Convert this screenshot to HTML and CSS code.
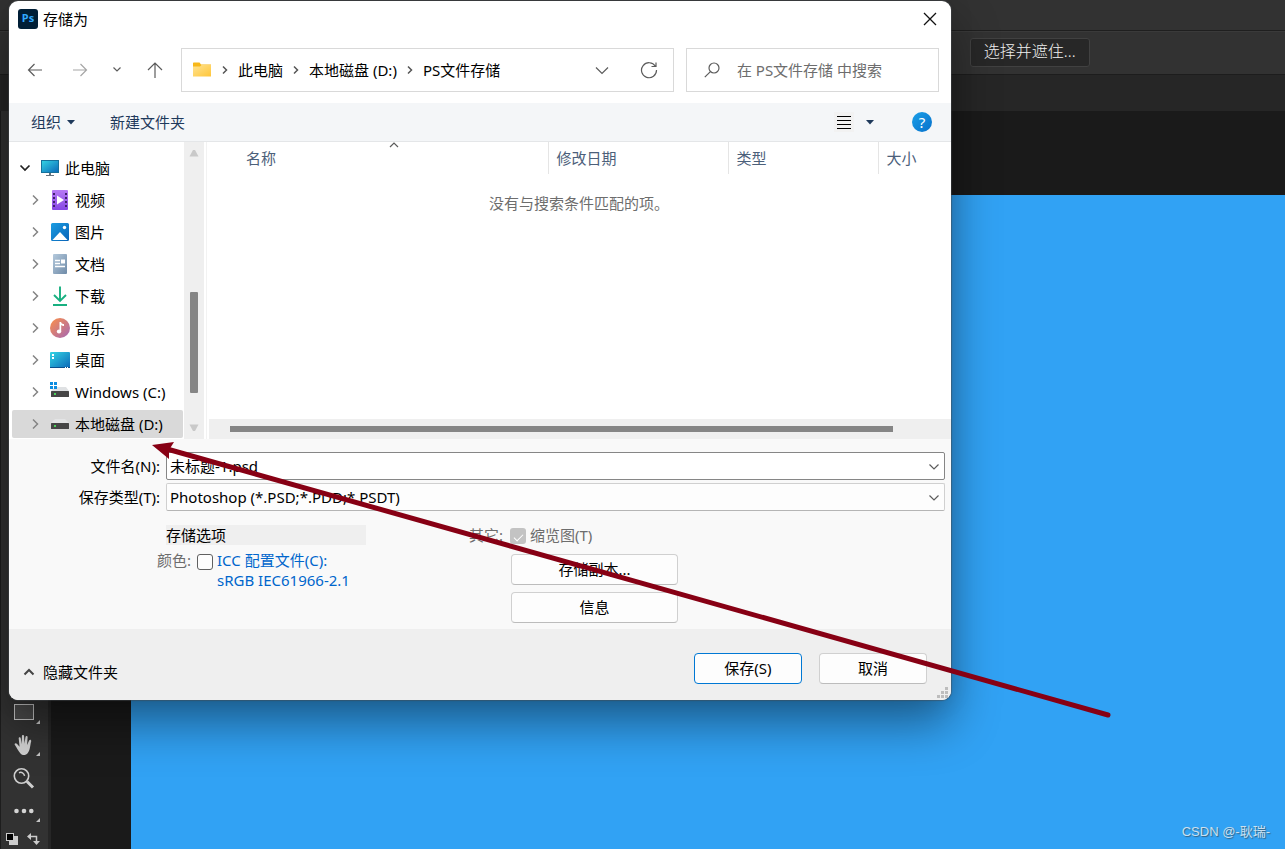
FILE: index.html
```html
<!DOCTYPE html>
<html lang="zh-CN">
<head>
<meta charset="utf-8">
<title>存储为</title>
<link rel="stylesheet" href="styles.css">
</head>
<body>
<div class="app">
  <header class="menu-bar"></header>
  <div class="options-bar"><button class="mask-button" type="button">选择并遮住...</button></div>
  <div class="tab-bar"></div>
  <div class="workspace">
    <aside class="tools">
      <button class="tool" type="button" aria-label="矩形工具">
        <svg width="34" height="24" viewBox="0 0 34 24"><rect x="7.500" y="4.500" width="19" height="15" fill="#4a4a4a" stroke="#c4c4c4"/><path d="M33 20v4h-4z" fill="#c4c4c4"/></svg>
      </button>
      <button class="tool" type="button" aria-label="抓手工具">
        <svg width="34" height="24" viewBox="0 0 34 24"><path d="M13.500 20.500C11 18 9.500 14 7.800 11.800c-.8-1.300.9-2.400 2.100-1l2.700 2.900-.9-8.200c-.1-1.500 1.900-1.600 2.100 0l.9 5.500.2-7.700c0-1.600 2.100-1.600 2.200 0l.3 7.500 1.100-6.700c.2-1.500 2.200-1.300 2.100.2l-.5 7.600 2-4.500c.7-1.400 2.400-.7 2.100.8-1.200 4.200-.9 8.600-3.400 11.800-2 2.500-5.200 2.700-7.300.5z" fill="#cfcfcf"/><path d="M33 19v4h-4z" fill="#c4c4c4"/></svg>
      </button>
      <button class="tool" type="button" aria-label="缩放工具">
        <svg width="34" height="24" viewBox="0 0 34 24"><circle cx="14.500" cy="10" r="7.200" fill="none" stroke="#cfcfcf" stroke-width="1.600"/><path d="M12 6.800c2.500-1.200 5 .2 5.600 3" fill="none" stroke="#cfcfcf" stroke-width="1.500"/><path d="M20 15.500l6 6" stroke="#cfcfcf" stroke-width="3"/></svg>
      </button>
      <button class="tool" type="button" aria-label="更多工具">
        <svg width="34" height="24" viewBox="0 0 34 24"><g fill="#d4d4d4"><circle cx="9.500" cy="12" r="2.300"/><circle cx="17" cy="12" r="2.300"/><circle cx="24.300" cy="12" r="2.300"/></g><path d="M33 19v4h-4z" fill="#c4c4c4"/></svg>
      </button>
      <button class="tool swatches" type="button" aria-label="切换颜色">
        <svg width="36" height="14" viewBox="0 0 36 14"><rect x="4" y="4" width="9" height="9" fill="#ccc"/><rect x="1.500" y="1.500" width="7" height="7" fill="#000" stroke="#ccc"/><path d="M24 4.500h7.500V11" fill="none" stroke="#ccc" stroke-width="1.500"/><path d="M22 4.500l4-3.500v7zM28 9h7l-3.500 4z" fill="#ccc"/></svg>
      </button>
    </aside>
    <main class="document"><p class="watermark">CSDN @-耿瑞-</p></main>
  </div>
</div>

<section class="dialog" role="dialog" aria-labelledby="dialog-title">
  <header class="title-bar">
    <svg width="20" height="20" viewBox="0 0 20 20"><rect width="20" height="20" rx="3" fill="#001e36"/><text class="logo-text" x="10" y="13" text-anchor="middle">Ps</text></svg>
    <h1 id="dialog-title">存储为</h1>
    <button class="icon-button close" type="button" aria-label="关闭"><svg width="14" height="14" viewBox="0 0 14 14"><path d="M1 1l12 12M13 1L1 13" stroke="#111" stroke-width="1.300"/></svg></button>
  </header>

  <nav class="nav-row">
    <div class="nav-buttons">
      <button class="icon-button back" type="button" aria-label="后退"><svg width="16" height="16" viewBox="0 0 16 16"><path d="M15 8H1.500M7.500 2l-6 6 6 6" class="line dark"/></svg></button>
      <button class="icon-button" type="button" aria-label="前进"><svg width="16" height="16" viewBox="0 0 16 16"><path d="M1 8h13.500M8.500 2l6 6-6 6" class="line pale"/></svg></button>
      <button class="icon-button" type="button" aria-label="最近"><svg width="10" height="16" viewBox="0 0 10 16"><path d="M1.500 5.500L5 9l3.500-3.500" class="line dark"/></svg></button>
      <button class="icon-button" type="button" aria-label="向上"><svg width="16" height="16" viewBox="0 0 16 16"><path d="M8 16V1M1 8l7-7 7 7" class="line dark"/></svg></button>
    </div>
    <div class="address">
      <svg width="20" height="16" viewBox="0 0 20 16"><defs><linearGradient id="folder" x1="0" y1="0" x2="1" y2="1"><stop offset="0" stop-color="#ffe391"/><stop offset="1" stop-color="#ffc63a"/></linearGradient></defs><path d="M1 1.500C1 .8 1.300.500 2 .500h5.500L9 2.500h10v4H1z" fill="#f7b718"/><path d="M1 4.500h7L9.500 3H19v11.500H1z" fill="url(#folder)"/></svg>
      <svg class="crumb-mark" width="8" height="10" viewBox="0 0 8 10"><path d="M2 1.500L5.500 5 2 8.500" class="line thick"/></svg>
      <a href="#pc">此电脑</a>
      <svg class="crumb-mark" width="8" height="10" viewBox="0 0 8 10"><path d="M2 1.500L5.500 5 2 8.500" class="line thick"/></svg>
      <a href="#d">本地磁盘 (D:)</a>
      <svg class="crumb-mark" width="8" height="10" viewBox="0 0 8 10"><path d="M2 1.500L5.500 5 2 8.500" class="line thick"/></svg>
      <a href="#ps">PS文件存储</a>
      <button class="icon-button address-drop" type="button" aria-label="历史"><svg width="16" height="16" viewBox="0 0 16 16"><path d="M2 5.500L8 11.500l6-6" class="line dark"/></svg></button>
      <button class="icon-button" type="button" aria-label="刷新"><svg width="18" height="18" viewBox="0 0 18 18"><path d="M15.400 5.300A7.500 7.500 0 1 0 16.500 9M16 1.500v4h-4.500" class="line dark"/></svg></button>
    </div>
    <label class="search">
      <svg width="16" height="16" viewBox="0 0 16 16"><circle cx="10" cy="6" r="5" class="line dark"/><path d="M6.400 9.600L.8 15.200" class="line dark"/></svg>
      <input type="search" aria-label="搜索" placeholder="在 PS文件存储 中搜索">
    </label>
  </nav>

  <div class="command-bar">
    <button class="command" type="button">组织 <svg width="8" height="5" viewBox="0 0 8 5"><path d="M0 0h8L4 4.500z" fill="#1e395b"/></svg></button>
    <button class="command" type="button">新建文件夹</button>
    <button class="icon-button view" type="button" aria-label="视图"><svg width="20" height="20" viewBox="0 0 20 20"><rect width="20" height="20" fill="#f2f2f2"/><path d="M3 4.500h14M3 8.500h14M3 12.500h14M3 16.500h14" stroke="#000"/></svg></button>
    <button class="icon-button" type="button" aria-label="更多视图"><svg width="8" height="5" viewBox="0 0 8 5"><path d="M0 0h8L4 4.500z" fill="#1e395b"/></svg></button>
    <button class="icon-button help" type="button" aria-label="帮助">?</button>
  </div>

  <div class="browser">
    <ul class="tree">
      <li class="root"><svg class="mark" width="12" height="12" viewBox="0 0 12 12"><path d="M1.500 3.500L6 8l4.500-4.500" class="line black"/></svg>
        <svg width="20" height="20" viewBox="0 0 20 20"><defs><linearGradient id="screen" x1="0" y1="0" x2="1" y2="1"><stop offset="0" stop-color="#34d5e4"/><stop offset="1" stop-color="#0b67b8"/></linearGradient></defs><rect x="1.500" y="2.500" width="17" height="12" fill="url(#screen)" stroke="#16719b"/><path d="M9 15h2v2H9zM6 17h8v1H6z" fill="#65727d"/></svg><span>此电脑</span></li>
      <li><svg class="mark" width="12" height="12" viewBox="0 0 12 12"><path d="M4 1.500L8.500 6 4 10.500" class="line gray"/></svg>
        <svg width="20" height="20" viewBox="0 0 20 20"><defs><linearGradient id="film" x1="0" y1="0" x2="0" y2="1"><stop offset="0" stop-color="#b77af5"/><stop offset="1" stop-color="#8647e4"/></linearGradient></defs><rect x="2" width="16" height="20" rx="1" fill="url(#film)"/><path d="M3 3h2v2H3zM3 7h2v2H3zM3 11h2v2H3zM3 15h2v2H3zM15 3h2v2h-2zM15 7h2v2h-2zM15 11h2v2h-2zM15 15h2v2h-2z" fill="#41206f"/><path d="M7 5.500l7 4.500-7 4.500z" fill="#fff"/></svg><span>视频</span></li>
      <li><svg class="mark" width="12" height="12" viewBox="0 0 12 12"><path d="M4 1.500L8.500 6 4 10.500" class="line gray"/></svg>
        <svg width="20" height="20" viewBox="0 0 20 20"><defs><linearGradient id="photo" x1="0" y1="0" x2="1" y2="1"><stop offset="0" stop-color="#1b9de2"/><stop offset="1" stop-color="#0963b7"/></linearGradient></defs><rect x="1" y="1" width="18" height="18" rx="1.500" fill="url(#photo)"/><path d="M2.500 18l7.500-8 7.500 8z" fill="#fff"/><circle cx="14.500" cy="5.500" r="1.700" fill="#fff"/></svg><span>图片</span></li>
      <li><svg class="mark" width="12" height="12" viewBox="0 0 12 12"><path d="M4 1.500L8.500 6 4 10.500" class="line gray"/></svg>
        <svg width="20" height="20" viewBox="0 0 20 20"><defs><linearGradient id="doc" x1="0" y1="0" x2="1" y2="1"><stop offset="0" stop-color="#b4c9dc"/><stop offset="1" stop-color="#6f8ba8"/></linearGradient></defs><rect x="3" width="14" height="20" rx="1" fill="url(#doc)"/><path d="M5 6.500h5M5 9.500h5M5 12.500h10" stroke="#fff" stroke-width="1.400"/><path d="M11 5.500h4v4h-4z" fill="#fff"/></svg><span>文档</span></li>
      <li><svg class="mark" width="12" height="12" viewBox="0 0 12 12"><path d="M4 1.500L8.500 6 4 10.500" class="line gray"/></svg>
        <svg width="20" height="20" viewBox="0 0 20 20"><path d="M10 .5v14M4 9l6 6 6-6M3 19h14" fill="none" stroke="#18b080" stroke-width="1.900"/></svg><span>下载</span></li>
      <li><svg class="mark" width="12" height="12" viewBox="0 0 12 12"><path d="M4 1.500L8.500 6 4 10.500" class="line gray"/></svg>
        <svg width="20" height="20" viewBox="0 0 20 20"><defs><linearGradient id="music" x1="0" y1="0" x2="1" y2="1"><stop offset=".15" stop-color="#f08a58"/><stop offset="1" stop-color="#a367b6"/></linearGradient></defs><circle cx="10" cy="10" r="10" fill="url(#music)"/><ellipse cx="9" cy="13.500" rx="2.200" ry="1.900" fill="#fff"/><path d="M9.500 4h1.700c0 2 2.800 2 2.800 2v2c-1.500 0-2.600-.7-2.800-1v6.500H9.500z" fill="#fff"/></svg><span>音乐</span></li>
      <li><svg class="mark" width="12" height="12" viewBox="0 0 12 12"><path d="M4 1.500L8.500 6 4 10.500" class="line gray"/></svg>
        <svg width="20" height="20" viewBox="0 0 20 20"><rect y="2" width="20" height="16" rx="1" fill="url(#screen)"/><path d="M2 4h2v2H2zM2 7h2v2H2z" fill="#fff"/><path d="M0 17h20v1H0z" fill="#0a4f8c"/><path d="M15 17h1v1h-1zM17 17h1v1h-1z" fill="#fff"/></svg><span>桌面</span></li>
      <li><svg class="mark" width="12" height="12" viewBox="0 0 12 12"><path d="M4 1.500L8.500 6 4 10.500" class="line gray"/></svg>
        <svg width="20" height="20" viewBox="0 0 20 20"><path d="M5 5h11l3 4H1z" fill="#dfe1e3"/><rect x="1" y="9" width="18" height="6" rx=".5" fill="#464646"/><path d="M4 11h2v2H4z" fill="#4bd15a"/><path d="M0 0h3v3H0zM4 0h3v3H4zM0 4h3v3H0zM4 4h3v3H4z" fill="#0c8ce0"/></svg><span>Windows (C:)</span></li>
      <li class="selected"><svg class="mark" width="12" height="12" viewBox="0 0 12 12"><path d="M4 1.500L8.500 6 4 10.500" class="line gray"/></svg>
        <svg width="20" height="20" viewBox="0 0 20 20"><path d="M5 5h10l4 4H1z" fill="#e3e4e5"/><rect x="1" y="9" width="18" height="6" rx=".5" fill="#464646"/><path d="M4 11h2v2H4z" fill="#4bd15a"/></svg><span>本地磁盘 (D:)</span></li>
    </ul>
    <div class="v-scroll"><svg width="10" height="8" viewBox="0 0 10 8"><path d="M4 1h2l3.500 6.500H.5z" fill="#c9c9c9"/></svg><span class="v-thumb"></span><svg width="10" height="8" viewBox="0 0 10 8"><path d="M.5.5h9L6 7H4z" fill="#c9c9c9"/></svg></div>
    <div class="files">
      <table>
        <thead><tr>
          <th class="name">名称<svg class="sort" width="10" height="6" viewBox="0 0 10 6"><path d="M1 5l4-4 4 4" class="line dark"/></svg></th>
          <th class="date">修改日期</th><th class="type">类型</th><th class="size">大小</th>
        </tr></thead>
        <tbody><tr><td colspan="4">没有与搜索条件匹配的项。</td></tr></tbody>
      </table>
      <div class="h-scroll"><span class="h-thumb"></span></div>
    </div>
  </div>

  <form class="save-form">
    <div class="fields">
      <label for="file-name">文件名(N):</label>
      <div class="combo active"><input id="file-name" type="text" value="未标题-1.psd"><svg width="10" height="6" viewBox="0 0 10 6"><path d="M.5.5L5 5 9.500.5" class="line dark"/></svg></div>
      <label for="file-type">保存类型(T):</label>
      <div class="combo"><select id="file-type"><option>Photoshop (*.PSD;*.PDD;*.PSDT)</option></select><svg width="10" height="6" viewBox="0 0 10 6"><path d="M.5.5L5 5 9.500.5" class="line dark"/></svg></div>
    </div>
    <div class="save-options">
      <div class="color-group">
        <h2>存储选项</h2>
        <div class="color-row"><span class="muted">颜色:</span><input id="icc" class="check" type="checkbox"><label class="profile" for="icc">ICC 配置文件(C):<br>sRGB IEC61966-2.1</label></div>
      </div>
      <div class="other-group">
        <div class="other-row muted"><span>其它:</span><input id="thumb" class="check" type="checkbox" checked disabled><label for="thumb">缩览图(T)</label></div>
        <button class="push" type="button">存储副本...</button>
        <button class="push" type="button">信息</button>
      </div>
    </div>
  </form>

  <footer class="dialog-footer">
    <button class="hide-folders" type="button"><svg width="12" height="8" viewBox="0 0 12 8"><path d="M1.500 6.500L6 2l4.500 4.500" fill="none" stroke="#444" stroke-width="2"/></svg>隐藏文件夹</button>
    <button class="push primary" type="button">保存(S)</button>
    <button class="push" type="button">取消</button>
    <svg class="grip" width="12" height="12" viewBox="0 0 12 12"><path d="M8 0h3v3H8zM8 4h3v3H8zM8 8h3v3H8zM4 4h3v3H4zM4 8h3v3H4zM0 8h3v3H0z" fill="#bdbdbd"/></svg>
  </footer>
</section>

<svg class="annotation" width="970" height="280" viewBox="0 0 970 280"><path d="M17 9L958 275" stroke="#870014" stroke-width="5" stroke-linecap="round"/><path d="M2 5l22-3-5 8 0 9z" fill="#870014"/></svg>
</body>
</html>
```
FILE: styles.css
```css
* { box-sizing: border-box; }

body {
  margin: 0;
  overflow: hidden;
  color: #000;
  font: 15px/20px "Noto Sans", "Noto Sans CJK SC", sans-serif;
}

button, input, select { font: inherit; color: inherit; }
button { padding: 0; border: 0; background: none; }
h1, h2, p, ul { margin: 0; padding: 0; font-size: 15px; font-weight: 400; }
svg { display: block; flex: none; }

.line { fill: none; stroke-width: 1.2; }
.dark { stroke: #5c5c5c; }
.pale { stroke: #a6a6a6; }
.gray { stroke: #848484; stroke-width: 1.5; }
.thick { stroke: #555; stroke-width: 1.5; }
.black { stroke: #222; stroke-width: 1.7; }
.muted { color: #6d6d6d; }

/* Application behind the dialog */
.app { display: flex; flex-direction: column; height: 100vh; background: #1a1a1a; }
.menu-bar { height: 31px; background: #323232; border-bottom: 1px solid #1f1f1f; }
.options-bar {
  display: flex;
  justify-content: flex-end;
  align-items: center;
  height: 44px;
  padding: 0 15.2% 2px 0;
  background: #323232;
  border-top: 1px solid #3a3a3a;
  border-bottom: 1px solid #1d1d1d;
}
.mask-button {
  width: 120px;
  height: 29px;
  padding-bottom: 3px;
  border: 1px solid #414141;
  border-radius: 3px;
  background: #272727;
  color: #f0f0f0;
  font-size: 16px;
  font-weight: 300;
}
.tab-bar { height: 36px; background: #262626; }
.workspace { display: flex; flex: 1; min-height: 0; }
.tools {
  display: flex;
  flex-direction: column;
  justify-content: flex-end;
  gap: 9px;
  width: 51px;
  padding: 0 0 3px 6px;
  background: #323232;
  border-left: 1px solid #1d1d1d;
  border-right: 3px solid #262626;
}
.tool { width: 34px; }
.swatches { margin-left: -2px; }
.document {
  display: flex;
  flex: 1;
  justify-content: flex-end;
  align-items: flex-end;
  margin: 84px 0 0 80px;
  padding: 0 15px 7px 0;
  background: #31a2f4;
}
.watermark {
  color: #c9e0f2;
  font: 13px/20px "Liberation Sans", "Noto Sans CJK SC", sans-serif;
  text-shadow: 1px 1px 1px #35627f;
}

/* Dialog window */
.dialog {
  position: absolute;
  top: 1px;
  left: 9px;
  right: 26%;
  overflow: hidden;
  border-radius: 9px;
  background: #fff;
  box-shadow: 0 0 1px 1px rgba(70, 74, 77, .5), 0 24px 48px rgba(0, 0, 0, .42), 0 0 24px rgba(0, 0, 0, .1);
}
.title-bar { display: flex; align-items: center; gap: 5px; height: 36px; padding: 0 14px 0 9px; }
.logo-text { fill: #31a8ff; font: 700 11px "Noto Sans", sans-serif; }
.close { margin-left: auto; }

.nav-row { display: flex; gap: 12px; padding: 11px 12px; }
.nav-buttons { display: flex; justify-content: space-between; align-items: center; width: 148px; padding: 0 6px; }
.back { margin-right: 4px; }
.address, .search { display: flex; align-items: center; height: 44px; border: 1px solid #d9d9d9; }
.address { flex: 1; padding: 0 15px 0 10px; white-space: nowrap; }
.address a { color: #000; text-decoration: none; }
.crumb-mark { margin: 0 9px; }
.address-drop { margin: 0 30px 0 auto; }
.search { gap: 17px; width: 253px; padding: 0 17px; }
.search input { flex: 1; min-width: 0; padding: 0; border: 0; outline: 0; background: none; }
.search input::placeholder { color: #6d6d6d; opacity: 1; }

.command-bar {
  display: flex;
  align-items: center;
  height: 39px;
  padding: 0 19px 0 22px;
  background: #f4f6f8;
  border-bottom: 1px solid #e4e6e8;
}
.command { display: flex; align-items: center; gap: 6px; margin-right: 35px; color: #1e395b; }
.view { margin: 0 12px 0 auto; }
.help {
  width: 20px;
  height: 20px;
  margin-left: 38px;
  border-radius: 50%;
  background: linear-gradient(135deg, #1ba0e8, #0670cb);
  color: #fff;
}

/* Folder tree and file list */
.browser { display: flex; }
.tree { display: flex; flex-direction: column; gap: 4px; width: 175px; padding: 12px 1px 1px 3px; list-style: none; }
.tree li { display: flex; align-items: center; height: 28px; padding-left: 17px; border-radius: 2px; white-space: nowrap; }
.tree .root { padding-left: 7px; }
.tree .selected { background: #d9d9d9; }
.mark { margin-right: 9px; }
.tree span { margin-left: 5px; }
.v-scroll {
  display: flex;
  flex-direction: column;
  align-items: center;
  width: 20px;
  padding: 7px 0;
  background: #efefef;
}
.v-thumb { width: 8px; height: 101px; margin: auto 0 31px; border-radius: 1px; background: #858585; }
.files { display: flex; flex: 1; flex-direction: column; margin-left: 2px; border-left: 1px solid #f2f2f2; }
.files table { width: 100%; table-layout: fixed; border-collapse: collapse; }
.files th { height: 32px; padding: 0 7px; border-left: 1px solid #e5e5e5; color: #4c607a; font-weight: 400; text-align: left; }
.files .name { position: relative; padding-left: 39px; border-left: 0; }
.sort { position: absolute; top: 0; left: calc(50% + 11px); }
.date { width: 180px; }
.type { width: 150px; }
.size { width: 72px; }
.files td { padding: 19px 0; color: #6d6d6d; text-align: center; }
.h-scroll { height: 20px; margin: auto 0 0 2px; padding: 7px 58px 7px 21px; background: #efefef; }
.h-thumb { display: block; height: 6px; background: #858585; }

/* File name, type and save options */
.save-form { padding: 13px 6px 6px 0; background: #f9f9f9; }
.fields { display: grid; grid-template-columns: 151px 1fr; align-items: center; gap: 3px 6px; }
.fields > label { text-align: right; }
.combo { display: flex; position: relative; height: 28px; border: 1px solid #d0d0d0; border-bottom-color: #b5b5b5; border-radius: 2px; background: #fdfdfd; }
.combo.active { border-color: #868686; background: #fff; }
.combo input, .combo select { flex: 1; padding: 0 24px 1px 3px; border: 0; outline: 0; background: none; appearance: none; }
.combo svg { position: absolute; top: 11px; right: 5px; pointer-events: none; }
.save-options { display: flex; gap: 103px; padding: 14px 0 0 148px; }
.color-group { width: 209px; }
.color-group h2 { margin-left: 9px; background: #efefef; }
.color-row { display: flex; gap: 4px; margin-top: 5px; white-space: nowrap; }
.color-row .check { margin: 4px 0 0 2px; }
.profile { color: #0066cc; }
.check {
  flex: none;
  width: 16px;
  height: 16px;
  margin: 0;
  border: 1px solid #606060;
  border-radius: 3px;
  background: #fdfdfd;
  appearance: none;
}
.check:disabled { display: grid; place-items: center; border: 0; background: #c3c3c3; }
.check:disabled::before { content: ""; width: 8px; height: 4px; border: solid #fff; border-width: 0 0 1px 1px; transform: rotate(-45deg); }
.other-group { display: flex; flex-direction: column; align-items: flex-end; gap: 7px; width: 209px; }
.other-row { display: flex; align-items: center; align-self: flex-start; gap: 4px; margin-bottom: 2px; }
.other-row .check { margin: 2px 0 0 3px; }
.push { width: 167px; height: 31px; padding-bottom: 2px; border: 1px solid #d0d0d0; border-bottom-color: #bcbcbc; border-radius: 4px; background: #fdfdfd; }

.dialog-footer { display: flex; position: relative; gap: 17px; padding: 24px 24px 16px 14px; background: #efefef; }
.hide-folders { display: flex; align-items: center; gap: 8px; height: 38px; margin-right: auto; margin-bottom: -7px; }
.dialog-footer .push { width: 108px; }
.dialog-footer .primary { border-color: #0078d4; }
.grip { position: absolute; right: 2px; bottom: 1px; }

/* Arrow drawn over the window */
.annotation { position: absolute; top: 440px; left: 150px; pointer-events: none; }
```
